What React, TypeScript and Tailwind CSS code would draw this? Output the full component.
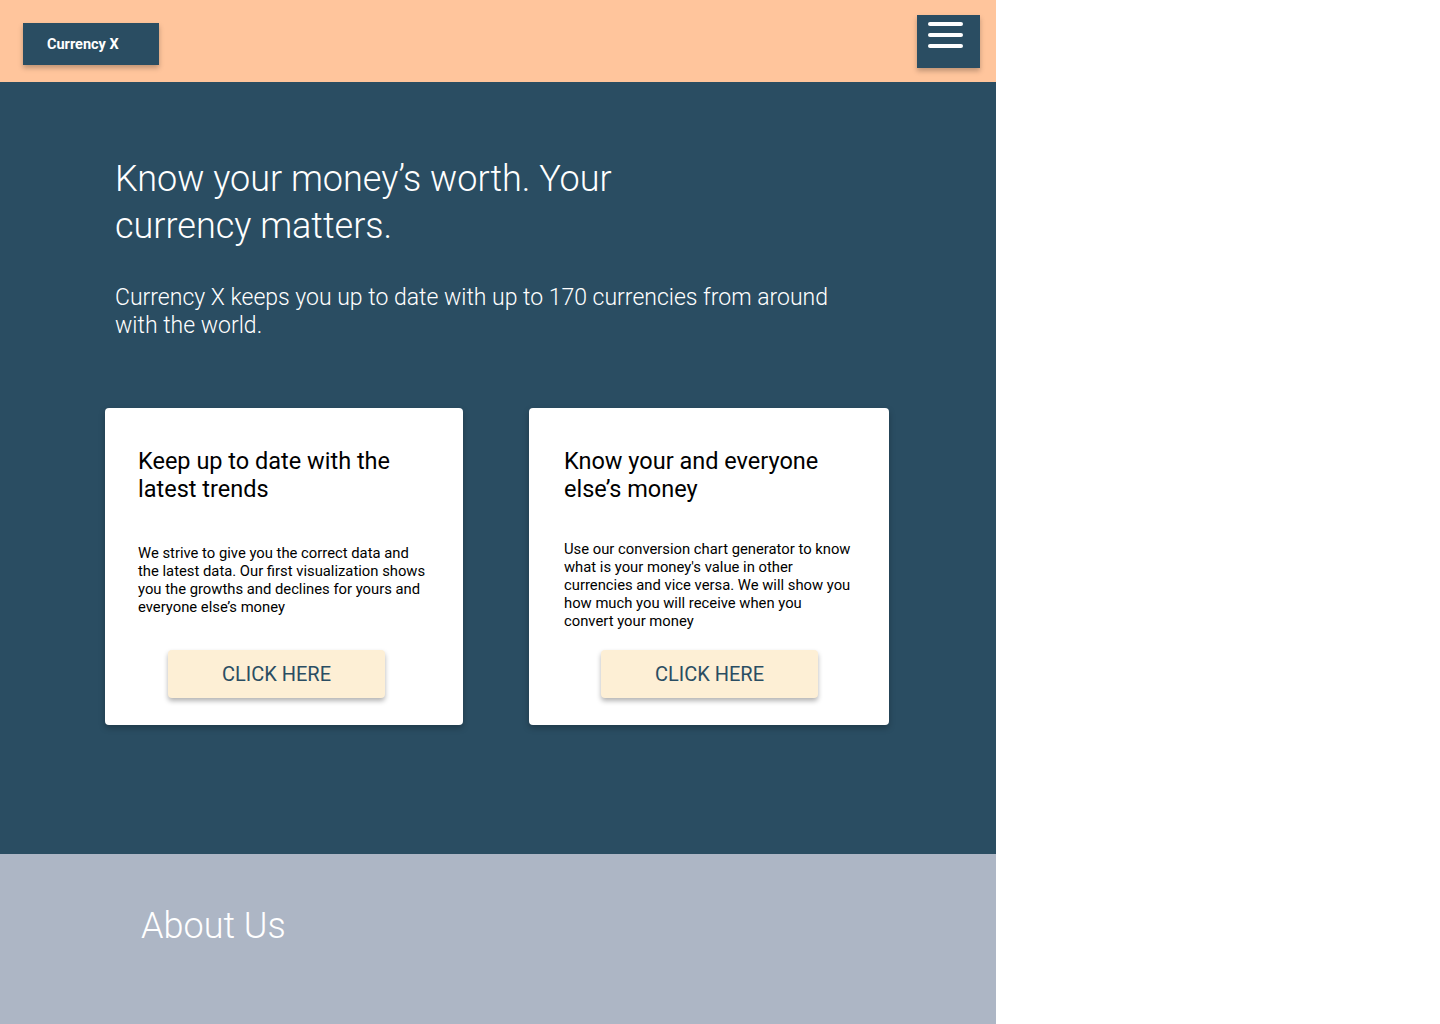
export default function App() {
  const cards = [
    {
      title: "Keep up to date with the latest trends",
      body: [
        "We strive to give you the correct data and",
        "the latest data. Our first visualization shows",
        "you the growths and declines for yours and",
        "everyone else’s money",
      ],
      bodyTop: "mt-[41px]",
      btnTop: "mt-[34px]",
      btnLeft: "ml-[30px]",
      box: "w-[358px] pl-[33px]",
    },
    {
      title: "Know your and everyone else’s money",
      body: [
        "Use our conversion chart generator to know",
        "what is your money's value in other",
        "currencies and vice versa. We will show you",
        "how much you will receive when you",
        "convert your money",
      ],
      bodyTop: "mt-[37px]",
      btnTop: "mt-[20px]",
      btnLeft: "ml-[37px]",
      box: "w-[360px] pl-[35px]",
    },
  ];

  return (
    <div className="w-[996px] min-h-[1024px] flex flex-col font-['Roboto',sans-serif]">
      <header className="h-[82px] bg-[#ffc59c] flex items-start justify-between pl-[23px] pr-[16px]">
        <div className="mt-[23px] w-[136px] h-[42px] bg-[#2a4d62] shadow-[0_3px_5px_rgba(0,0,0,0.25)] flex items-center pl-[24px] pt-[2px]">
          <span className="text-white text-[14.5px] font-bold">Currency X</span>
        </div>
        <button className="mt-[15px] w-[63px] h-[53px] bg-[#2a4d62] shadow-[0_3px_5px_rgba(0,0,0,0.25)] flex flex-col items-start pl-[11px] pt-[7px] gap-[7px]">
          <span className="block w-[35px] h-[4px] rounded-full bg-white" />
          <span className="block w-[35px] h-[4px] rounded-full bg-white" />
          <span className="block w-[35px] h-[4px] rounded-full bg-white" />
        </button>
      </header>

      <section className="h-[772px] bg-[#2a4d62] pt-[74px]">
        <h1 className="ml-[115px] w-[540px] text-white text-[36px] leading-[47px] font-light">
          Know your money’s worth. Your currency matters.
        </h1>
        <p className="ml-[115px] mt-[34px] w-[730px] text-white text-[23px] leading-[28px] font-light">
          Currency X keeps you up to date with up to 170 currencies from around with the world.
        </p>
        <div className="flex gap-[66px] ml-[105px] mt-[68px]">
          {cards.map((c) => (
            <div
              key={c.title}
              className={`${c.box} h-[317px] bg-white rounded-[4px] shadow-[0_3px_6px_rgba(0,0,0,0.25)] pt-[39px]`}
            >
              <h2 className="w-[280px] text-[23.5px] leading-[28px] text-black">{c.title}</h2>
              <p className={`${c.bodyTop} text-[14.8px] leading-[18px] text-black whitespace-nowrap`}>
                {c.body.map((line) => (
                  <span key={line} className="block">
                    {line}
                  </span>
                ))}
              </p>
              <button
                className={`${c.btnTop} ${c.btnLeft} w-[217px] h-[48px] bg-[#fdefd5] rounded-[4px] shadow-[0_3px_5px_rgba(0,0,0,0.3)] text-[20px] text-[#2a4d62] flex items-center justify-center`}
              >
                CLICK HERE
              </button>
            </div>
          ))}
        </div>
      </section>

      <section className="h-[170px] bg-[#adb6c5] pt-[48px]">
        <h2 className="ml-[141px] text-white text-[36px] leading-[48px] font-light">About Us</h2>
      </section>
    </div>
  );
}
